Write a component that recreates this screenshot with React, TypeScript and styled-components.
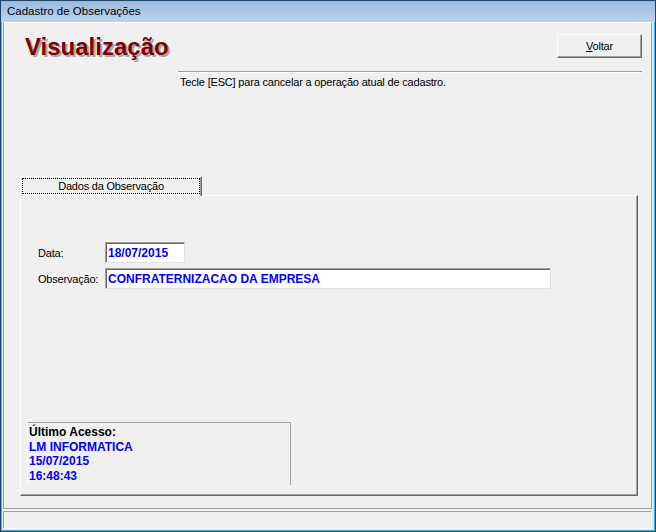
import React from 'react';
import styled, { createGlobalStyle } from 'styled-components';

const GlobalStyle = createGlobalStyle`
  html, body {
    margin: 0;
    padding: 0;
    background: #f0f0f0;
  }
  body {
    font-family: 'Liberation Sans', Arial, sans-serif;
    font-size: 11px;
    color: #000;
  }
  * {
    box-sizing: border-box;
  }
`;

const Window = styled.div`
  width: 656px;
  height: 532px;
  border: 1px solid #1f4566;
  display: flex;
  flex-direction: column;
  background: #d3ebfa;
`;

const TitleBar = styled.div`
  height: 21px;
  line-height: 21px;
  padding-left: 6px;
  font-size: 11.5px;
  color: #000;
  background: linear-gradient(180deg, #9cb9da 0%, #adc8e5 55%, #bcd5ed 100%);
`;

const Frame = styled.div`
  flex: 1;
  display: flex;
  flex-direction: column;
  gap: 2px;
  padding: 0 2px 1px 1px;
  border-left: 1px solid #4fb2e8;
  border-right: 1px solid #4fb2e8;
  border-bottom: 1px solid #4fb2e8;
  background: #f0f0f0;
  box-shadow: inset 1px 0 0 #d3ebfa, inset -2px -1px 0 #d3ebfa;
`;

const Content = styled.div`
  flex: 1;
  display: flex;
  flex-direction: column;
  background: #f0f0f0;
  border-top: 1px solid #fff;
  border-left: 1px solid #a0a0a0;
  border-right: 1px solid #a0a0a0;
  border-bottom: 1px solid #a0a0a0;
`;

const Header = styled.div`
  display: flex;
  align-items: flex-start;
  padding: 10px 9px 0 21px;
`;

const Heading = styled.h1`
  width: 153px;
  margin: 0;
  font-family: 'Liberation Sans', Arial, sans-serif;
  font-size: 24px;
  line-height: 28px;
  font-weight: 700;
  color: #800000;
  text-shadow: 2px 2px 0 #a8a8a8;
  white-space: nowrap;
`;

const HeaderSide = styled.div`
  flex: 1;
  display: flex;
  flex-direction: column;
`;

const Button = styled.button`
  align-self: flex-end;
  width: 85px;
  height: 24px;
  margin-top: 1px;
  padding: 0;
  font-family: 'Liberation Sans', Arial, sans-serif;
  font-size: 11px;
  letter-spacing: -0.2px;
  color: #000;
  background: #f0f0f0;
  border-style: solid;
  border-width: 1px;
  border-color: #fff #696969 #696969 #fff;
  box-shadow: inset -1px -1px 0 #a0a0a0;
  u {
    text-decoration: underline;
  }
`;

const Separator = styled.div`
  margin-top: 13px;
  border-top: 1px solid #a0a0a0;
  border-bottom: 1px solid #fff;
`;

const Hint = styled.div`
  margin: 3px 0 0 2px;
  line-height: 13px;
  letter-spacing: -0.18px;
`;

const TabStrip = styled.div`
  display: flex;
  margin: 87px 0 0 16px;
`;

const Tab = styled.div`
  position: relative;
  z-index: 1;
  width: 182px;
  height: 20px;
  margin-bottom: -1px;
  padding: 1px 1px 2px 1px;
  background: #f0f0f0;
  border-top: 1px solid #fff;
  border-left: 1px solid #fff;
  border-right: 1px solid #696969;
  box-shadow: inset -1px 0 0 #a0a0a0;
`;

const TabFocus = styled.div`
  height: 16px;
  border: 1px dotted #000;
  text-align: center;
  line-height: 14px;
  letter-spacing: -0.2px;
`;

const Panel = styled.div`
  height: 301px;
  margin: 0 13px 12px 16px;
  display: flex;
  flex-direction: column;
  padding: 46px 0 0 17px;
  border-top: 1px solid #fff;
  border-left: 1px solid #fff;
  border-right: 1px solid #696969;
  border-bottom: 1px solid #696969;
  box-shadow: inset -1px -1px 0 #a0a0a0;
`;

const Fields = styled.div`
  display: flex;
  flex-direction: column;
  gap: 5px;
`;

const Row = styled.div`
  display: grid;
  grid-template-columns: 67px auto;
  align-items: center;
`;

const Label = styled.span`
  letter-spacing: -0.2px;
`;

const Field = styled.input<{ $width: number }>`
  width: ${({ $width }) => $width}px;
  height: 21px;
  padding: 0 0 0 2px;
  margin: 0;
  font-family: 'Liberation Sans', Arial, sans-serif;
  font-size: 12px;
  font-weight: 700;
  color: #0000ff;
  background: #fff;
  border-style: solid;
  border-width: 1px;
  border-color: #a0a0a0 #e3e3e3 #e3e3e3 #a0a0a0;
  box-shadow: inset 1px 1px 0 #696969;
  outline: none;
`;

const AccessBox = styled.div`
  width: 264px;
  height: 63px;
  margin: auto 0 10px -11px;
  padding: 2px 0 0 1px;
  border-top: 1px solid #a0a0a0;
  border-right: 1px solid #a0a0a0;
  border-left: 1px solid #fff;
  font-size: 12px;
  font-weight: 700;
  line-height: 14.6px;
`;

const AccessLine = styled.div<{ $accent?: boolean }>`
  color: ${({ $accent }) => ($accent ? '#0000ff' : '#000')};
`;

const StatusBar = styled.div`
  height: 18px;
  border-top: 1px solid #a0a0a0;
  border-left: 1px solid #a0a0a0;
  border-right: 1px solid #fff;
  border-bottom: 1px solid #fff;
`;

const App: React.FC = () => {
  return (
    <>
      <GlobalStyle />
      <Window>
        <TitleBar>Cadastro de Observações</TitleBar>
        <Frame>
          <Content>
            <Header>
              <Heading>Visualização</Heading>
              <HeaderSide>
                <Button type="button">
                  <u>V</u>oltar
                </Button>
                <Separator />
                <Hint>Tecle [ESC] para cancelar a operação atual de cadastro.</Hint>
              </HeaderSide>
            </Header>

            <TabStrip>
              <Tab>
                <TabFocus>Dados da Observação</TabFocus>
              </Tab>
            </TabStrip>
            <Panel>
              <Fields>
                <Row>
                  <Label>Data:</Label>
                  <Field $width={80} readOnly value="18/07/2015" />
                </Row>
                <Row>
                  <Label>Observação:</Label>
                  <Field $width={446} readOnly value="CONFRATERNIZACAO DA EMPRESA" />
                </Row>
              </Fields>
              <AccessBox>
                <AccessLine>Último Acesso:</AccessLine>
                <AccessLine $accent>LM INFORMATICA</AccessLine>
                <AccessLine $accent>15/07/2015</AccessLine>
                <AccessLine $accent>16:48:43</AccessLine>
              </AccessBox>
            </Panel>
          </Content>
          <StatusBar />
        </Frame>
      </Window>
    </>
  );
};

export default App;
